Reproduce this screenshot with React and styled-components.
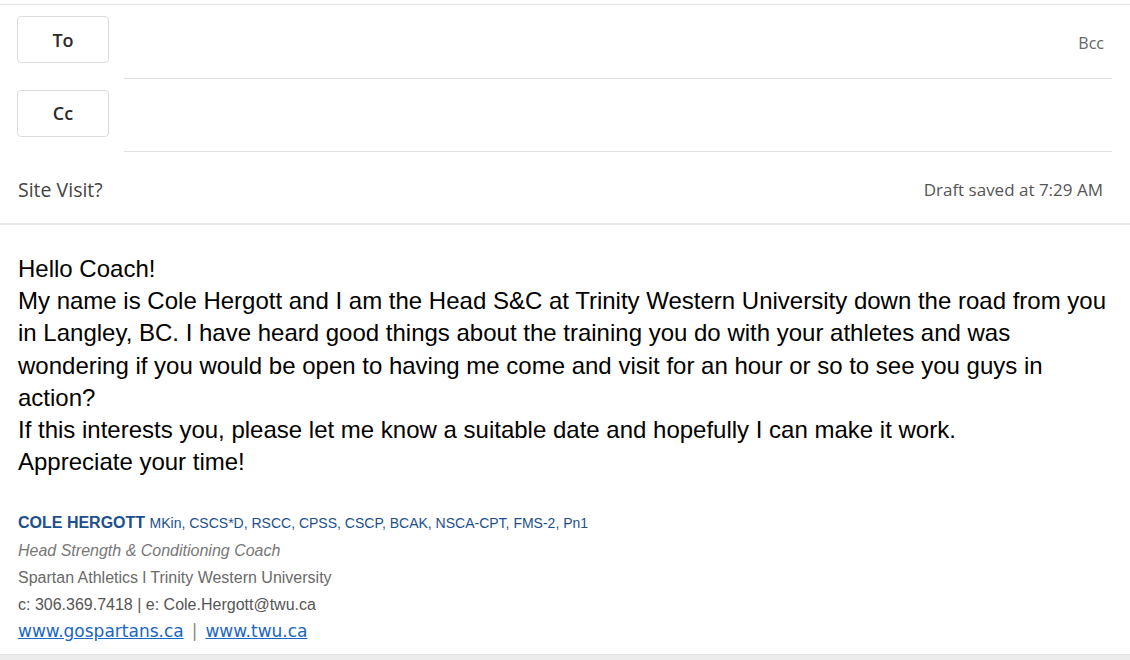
import React from 'react'
import styled, { createGlobalStyle } from 'styled-components'

const GlobalStyle = createGlobalStyle`
  html, body {
    margin: 0;
    padding: 0;
    background: #ffffff;
  }
  body {
    font-family: 'Open Sans', 'Noto Sans', sans-serif;
  }
`

const recipients = [
  { label: 'To', extra: 'Bcc' },
  { label: 'Cc', extra: '' },
]

export default function App() {
  return (
    <>
      <GlobalStyle />
      <StyledPage>
        <StyledHeader>
          {recipients.map((r) => (
            <StyledRecipientRow key={r.label}>
              <StyledFieldButton>{r.label}</StyledFieldButton>
              <StyledRecipientInput>
                {r.extra && <StyledBcc>{r.extra}</StyledBcc>}
              </StyledRecipientInput>
            </StyledRecipientRow>
          ))}
        </StyledHeader>
        <StyledSubjectRow>
          <StyledSubject>Site Visit?</StyledSubject>
          <StyledDraft>Draft saved at 7:29 AM</StyledDraft>
        </StyledSubjectRow>
        <StyledBody>
          <StyledParagraph>Hello Coach!</StyledParagraph>
          <StyledParagraph>
            My name is Cole Hergott and I am the Head S&amp;C at Trinity Western University down the road from you<br />
            in Langley, BC. I have heard good things about the training you do with your athletes and was<br />
            wondering if you would be open to having me come and visit for an hour or so to see you guys in<br />
            action?
          </StyledParagraph>
          <StyledParagraph>
            If this interests you, please let me know a suitable date and hopefully I can make it work.
          </StyledParagraph>
          <StyledParagraph>Appreciate your time!</StyledParagraph>

          <StyledSignature>
            <StyledSigLine>
              <StyledName>COLE HERGOTT</StyledName> <StyledCreds>MKin, CSCS*D, RSCC, CPSS, CSCP, BCAK, NSCA-CPT, FMS-2, Pn1</StyledCreds>
            </StyledSigLine>
            <StyledSigLine tone="#777777" italic>Head Strength &amp; Conditioning Coach</StyledSigLine>
            <StyledSigLine tone="#6a6a6a">Spartan Athletics l Trinity Western University</StyledSigLine>
            <StyledSigLine tone="#555555">c: 306.369.7418 | e: Cole.Hergott@twu.ca</StyledSigLine>
            <StyledLinks>
              <StyledLink href="#">www.gospartans.ca</StyledLink>
              <StyledPipe>|</StyledPipe>
              <StyledLink href="#">www.twu.ca</StyledLink>
            </StyledLinks>
          </StyledSignature>
        </StyledBody>
        <StyledFooter />
      </StyledPage>
    </>
  )
}

const StyledPage = styled.div`
  width: 1130px;
  height: 660px;
  padding-top: 4px;
  box-sizing: border-box;
  display: flex;
  flex-direction: column;
  overflow: hidden;
`

const StyledHeader = styled.div`
  border-top: 1px solid #e4e4e4;
  padding: 0 18px 0 17px;
  display: flex;
  flex-direction: column;
`

const StyledRecipientRow = styled.div`
  display: flex;
  align-items: stretch;
  height: 73.5px;
`

const StyledFieldButton = styled.div`
  width: 92px;
  height: 47px;
  margin-top: 11px;
  box-sizing: border-box;
  border: 1px solid #dcdcdc;
  border-radius: 4px;
  display: flex;
  align-items: center;
  justify-content: center;
  font-size: 18px;
  font-weight: 600;
  color: #2a2a2a;
  background: #ffffff;
`

const StyledRecipientInput = styled.div`
  flex: 1;
  margin-left: 15px;
  border-bottom: 1px solid #e1e1e1;
  display: flex;
  align-items: center;
  justify-content: flex-end;
  padding-right: 8px;
  padding-top: 4px;
`

const StyledBcc = styled.span`
  font-size: 16px;
  color: #666666;
`

const StyledSubjectRow = styled.div`
  height: 73px;
  border-bottom: 2px solid #e6e6e6;
  display: flex;
  align-items: center;
  justify-content: space-between;
  padding: 4px 27px 0 18px;
  box-sizing: border-box;
`

const StyledSubject = styled.span`
  font-size: 19.5px;
  color: #444444;
`

const StyledDraft = styled.span`
  font-size: 17px;
  color: #555555;
`

const StyledBody = styled.div`
  flex: 1;
  padding: 28px 18px 0 18px;
  font-family: 'Liberation Sans', Arial, sans-serif;
  color: #000000;
`

const StyledParagraph = styled.div`
  font-size: 24px;
  line-height: 32.2px;
  white-space: nowrap;
`

const StyledSignature = styled.div`
  margin-top: 31px;
  display: flex;
  flex-direction: column;
`

const StyledSigLine = styled.div`
  font-size: 16px;
  line-height: 27px;
  color: ${props => props.tone || '#1c4f8c'};
  font-style: ${props => props.italic ? 'italic' : 'normal'};
`

const StyledName = styled.span`
  font-weight: bold;
  font-size: 16px;
  color: #1c4f8c;
`

const StyledCreds = styled.span`
  font-size: 14px;
  color: #1c4f8c;
`

const StyledLinks = styled.div`
  display: flex;
  align-items: baseline;
  gap: 8px;
  font-family: 'DejaVu Sans', Verdana, sans-serif;
  font-size: 17px;
  line-height: 26px;
`

const StyledLink = styled.a`
  color: #1a66c2;
  text-decoration: underline;
`

const StyledPipe = styled.span`
  color: #888888;
`

const StyledFooter = styled.div`
  height: 5px;
  background: #ececec;
  border-top: 1px solid #e2e2e2;
`
